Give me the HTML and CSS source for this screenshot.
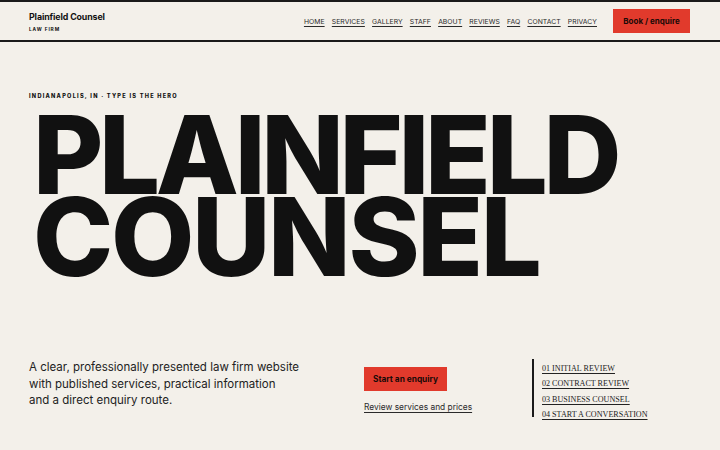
FILE: index.html
```html
<!DOCTYPE html>
<html lang="en">
<head>
<meta charset="utf-8">
<title>Plainfield Counsel</title>
<link rel="stylesheet" href="styles.css">
</head>
<body>
<header class="site-header">
  <div class="brand">
    <div class="brand-name">Plainfield Counsel</div>
    <div class="brand-sub">LAW FIRM</div>
  </div>
  <nav class="nav">
    <a href="#">HOME</a>
    <a href="#">SERVICES</a>
    <a href="#">GALLERY</a>
    <a href="#">STAFF</a>
    <a href="#">ABOUT</a>
    <a href="#">REVIEWS</a>
    <a href="#">FAQ</a>
    <a href="#">CONTACT</a>
    <a href="#">PRIVACY</a>
  </nav>
  <a class="btn btn-header" href="#">Book / enquire</a>
</header>
<main class="hero">
  <p class="eyebrow">INDIANAPOLIS, IN · TYPE IS THE HERO</p>
  <h1 class="hero-title"><span class="line-1">PLAINFIELD</span><span class="line-2">COUNSEL</span></h1>
  <div class="hero-bottom">
    <p class="lede">A clear, professionally presented law firm website<br>with published services, practical information<br>and a direct enquiry route.</p>
    <div class="actions">
      <a class="btn btn-main" href="#">Start an enquiry</a>
      <a class="text-link" href="#">Review services and prices</a>
    </div>
    <ul class="index-list">
      <li><a href="#">01 INITIAL REVIEW</a></li>
      <li><a href="#">02 CONTRACT REVIEW</a></li>
      <li><a href="#">03 BUSINESS COUNSEL</a></li>
      <li><a href="#">04 START A CONVERSATION</a></li>
    </ul>
  </div>
</main>
</body>
</html>
```
FILE: styles.css
```css
* { box-sizing: border-box; }
html, body { margin: 0; padding: 0; }
body {
  background: #f3f0ea;
  color: #111;
  font-family: Inter, "Liberation Sans", sans-serif;
  width: 720px;
  height: 450px;
  overflow: hidden;
}
a { color: inherit; }

.site-header {
  display: flex;
  align-items: center;
  height: 42px;
  padding: 0 30px 0 29px;
  border-top: 2px solid #1a1a1a;
  border-bottom: 2px solid #1a1a1a;
}
.brand { flex: 1; }
.brand-name {
  font-weight: 700;
  font-size: 8.8px;
  letter-spacing: -0.1px;
  line-height: 12px;
}
.brand-sub {
  font-weight: 700;
  font-size: 4.8px;
  letter-spacing: 0.9px;
  margin-top: 3px;
}
.nav {
  display: flex;
  gap: 7.2px;
  margin-right: 16px;
  margin-top: 1px;
}
.nav a {
  font-size: 6.8px;
  color: #2a2a2a;
  text-decoration: underline;
  text-underline-offset: 2px;
  letter-spacing: 0.05px;
}
.btn {
  display: inline-flex;
  align-items: center;
  justify-content: center;
  background: #e13a2c;
  color: #1a0a08;
  font-weight: 700;
  text-decoration: none;
}
.btn-header {
  width: 77px;
  height: 24px;
  font-size: 8px;
}

.hero { padding: 0 29px; }
.eyebrow {
  margin: 50px 0 0;
  font-size: 5.6px;
  font-weight: 800;
  letter-spacing: 1.25px;
  line-height: 8px;
}
.hero-title {
  margin: 14px 0 0 4px;
  font-size: 108px;
  font-weight: 800;
  line-height: 82px;
  letter-spacing: -4.3px;
  color: #111;
}
.hero-title span { display: block; }
.hero-title .line-2 { letter-spacing: -2.4px; }

.hero-bottom {
  display: grid;
  grid-template-columns: 335px 168px auto;
  margin-top: 81px;
}
.lede {
  margin: 0;
  font-size: 11.5px;
  line-height: 16.5px;
  color: #222;
}
.actions {
  display: flex;
  flex-direction: column;
  align-items: flex-start;
  padding-top: 8px;
}
.btn-main {
  width: 83px;
  height: 24px;
  font-size: 8.3px;
}
.text-link {
  margin-top: 11px;
  font-size: 8.4px;
  color: #2a2a2a;
  text-underline-offset: 2px;
}
.index-list {
  list-style: none;
  margin: 0;
  padding: 2px 0 0 8px;
  border-left: 2px solid #1a1a1a;
  height: 58px;
}
.index-list li {
  font-family: "Liberation Serif", "DejaVu Serif", serif;
  font-size: 8.1px;
  line-height: 15.3px;
  color: #222;
}
.index-list a { text-underline-offset: 2px; }
```
